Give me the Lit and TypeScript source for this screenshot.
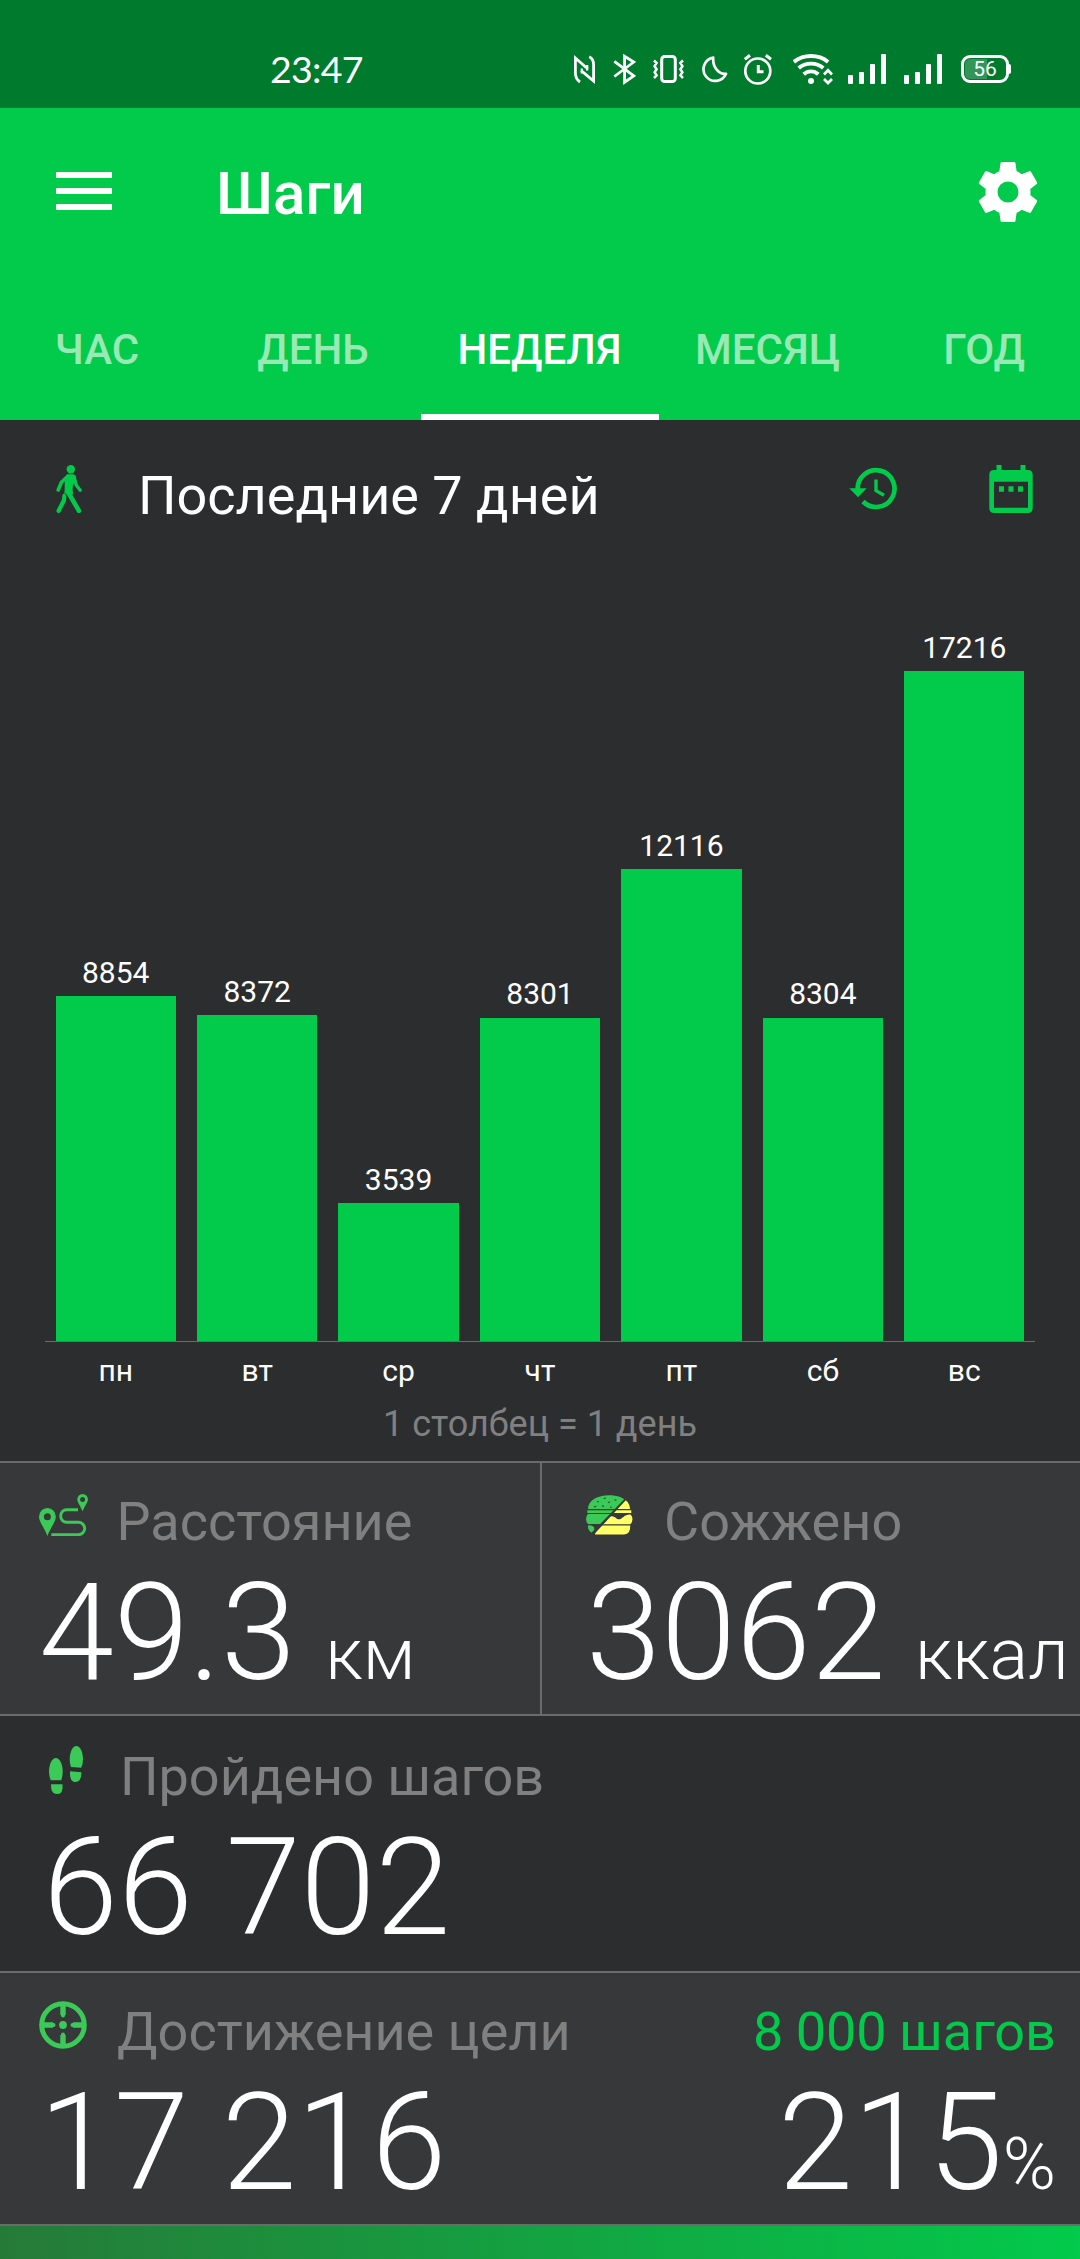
import { LitElement, html, css, svg } from "lit";
import { customElement, property } from "lit/decorators.js";

const GREEN = "#02ca4b";
const LEAF = "#3bca58";

@customElement("status-bar")
class StatusBar extends LitElement {
  static styles = css`
    :host {
      display: flex;
      align-items: center;
      box-sizing: border-box;
      height: 108px;
      padding: 30px 69px 0 270px;
      background: #007a2d;
      color: #fff;
    }
    .time {
      font: 400 37.5px/48px Lato, Roboto, sans-serif;
      letter-spacing: -0.7px;
      margin-right: auto;
    }
    .icons {
      display: flex;
      align-items: center;
    }
    svg {
      display: block;
      height: 32px;
      fill: none;
      stroke: #fff;
    }
    .nfc { width: 21px; }
    .bt { width: 23px; margin-left: 18px; }
    .vib { width: 31px; margin-left: 17px; }
    .moon { width: 26px; margin-left: 18px; }
    .alarm { width: 28px; margin-left: 16px; }
    .wifi { width: 40px; margin-left: 21px; }
    .sig { width: 38px; margin-left: 15px; }
    .sig.second { margin-left: 18px; }
    .battery {
      display: flex;
      align-items: center;
      margin-left: 19px;
    }
    .shell {
      box-sizing: border-box;
      width: 48px;
      height: 28px;
      border: 3px solid #fff;
      border-radius: 9px;
      padding: 1px;
      background: linear-gradient(to right, rgba(255, 255, 255, 0.2) 54%, transparent 54%) content-box;
      font: 400 21px/21px Roboto, sans-serif;
      text-align: center;
    }
    .nub {
      width: 2px;
      height: 10px;
      background: #fff;
      border-radius: 0 2px 2px 0;
    }
  `;

  signal(cls: string) {
    return html`<svg class=${cls} viewBox="0 0 38 32">
      <g fill="#fff" stroke="none">
        <rect x="0" y="22" width="5" height="9" rx="1" />
        <rect x="11" y="19" width="5" height="12" rx="1" />
        <rect x="22" y="11" width="5" height="20" rx="1" />
        <rect x="33" y="1" width="5" height="30" rx="1" />
      </g>
    </svg>`;
  }

  render() {
    return html`
      <div class="time">23:47</div>
      <div class="icons">
        <svg class="nfc" viewBox="0 0 21 32" stroke-width="2.8">
          <path d="M6 29C3 27 1.4 24 1.4 20V5L13.6 15.800" />
          <path d="M7.200 17.600L19.600 28V12C19.600 8 18 5 15.200 3.800" />
          <path d="M13.200 12v5.500M7.800 15.500v5" stroke-width="2.200" />
        </svg>
        <svg class="bt" viewBox="0 0 23 32" stroke-width="2.800">
          <path d="M1.300 8.300L20.800 22.800L11.600 29.200V3.200L20.800 9L1.300 23.500" />
        </svg>
        <svg class="vib" viewBox="0 0 31 32">
          <rect x="8.700" y="3.500" width="13.600" height="25" rx="3" stroke-width="3" />
          <path d="M1 7.500l2.600 2.500-2 3.200 2 3-2 3 2 3.200L1 25M30 7.500L27.400 10l2 3.200-2 3 2 3-2 3.200L30 25" stroke-width="2.500" />
        </svg>
        <svg class="moon" viewBox="0 0 26 32" stroke-width="2.700" stroke-linejoin="round">
          <path d="M11.200 4.700A11.700 11.700 0 1 0 24 20.800C17.500 21.800 10.500 14.800 11.200 4.700z" />
        </svg>
        <svg class="alarm" viewBox="0 0 28 32" stroke-width="2.700">
          <circle cx="13.800" cy="18" r="12.500" />
          <path d="M14.300 12v6.800h5.200" stroke-width="3" />
          <path d="M.8 6.200L6 2.200M21.800 2.200L27 6.200" stroke-width="3" />
        </svg>
        <svg class="wifi" viewBox="0 0 40 32" stroke-width="3.900">
          <path d="M.9 8.900C10.500 1 25.500 1 35.100 8.900" />
          <path d="M5.700 14.900C12.500 9.200 23.500 9.200 30.300 14.900" />
          <path d="M10.700 21.200C15 17.400 21 17.400 25.300 21.200" />
          <circle cx="18" cy="28" r="3" fill="#fff" stroke="none" />
          <path d="M31 21.500l4-4.200 4 4.200M31 26l4 4 4-4" stroke-width="2.700" />
        </svg>
        ${this.signal("sig")} ${this.signal("sig second")}
        <div class="battery">
          <div class="shell">56</div>
          <div class="nub"></div>
        </div>
      </div>
    `;
  }
}

@customElement("app-header")
class AppHeader extends LitElement {
  static styles = css`
    :host {
      display: flex;
      flex-direction: column;
      height: 312px;
      background: #02ca4b;
      color: #fff;
      font-family: Roboto, sans-serif;
      font-weight: 500;
      overflow: hidden;
    }
    .bar {
      display: flex;
      align-items: center;
      height: 168px;
      padding: 0 36px 0 56px;
    }
    .menu { width: 56px; height: 38px; margin-top: -2px; }
    .title {
      flex: 1;
      font-size: 60px;
      line-height: 72px;
      margin: 4px 0 0 104px;
    }
    .gear { width: 72px; height: 72px; }
    .tabs {
      display: flex;
      height: 144px;
      margin-left: -11px;
    }
    .tab {
      flex: none;
      box-sizing: border-box;
      width: 216px;
      padding-top: 49px;
      font-size: 42px;
      line-height: 50px;
      text-align: center;
      color: rgba(255, 255, 255, 0.6);
    }
    .tab.active {
      width: 238px;
      padding-right: 1px;
      color: #fff;
      border-bottom: 6px solid #fff;
    }
    .tab.wide { width: 218px; padding-right: 1px; }
    .tab.last { padding-right: 2px; }
    svg { display: block; fill: #fff; }
  `;

  render() {
    return html`
      <div class="bar">
        <svg class="menu" viewBox="0 0 56 38"><path d="M0 0h56v6H0zM0 16h56v6H0zM0 32h56v6H0z" /></svg>
        <div class="title">Шаги</div>
        <svg class="gear" viewBox="0 0 24 24">
          <path d="M12 15.500a3.500 3.500 0 1 1 0-7 3.500 3.500 0 0 1 0 7m7.430-2.530c.04-.32.07-.64.07-.97s-.03-.66-.07-1l2.110-1.630c.19-.15.24-.42.12-.64l-2-3.460c-.12-.22-.39-.31-.61-.22l-2.490 1c-.52-.39-1.060-.73-1.690-.98l-.37-2.650A.506.506 0 0 0 14 2h-4c-.25 0-.46.18-.5.42l-.37 2.650c-.63.25-1.170.59-1.690.98l-2.490-1c-.22-.09-.49 0-.61.22l-2 3.460c-.13.22-.07.49.12.64L4.570 11c-.04.34-.07.67-.07 1s.03.65.07.97l-2.110 1.660c-.19.15-.25.42-.12.64l2 3.460c.12.22.39.3.61.22l2.490-1.010c.52.4 1.060.74 1.690.99l.37 2.650c.04.24.25.42.5.42h4c.25 0 .46-.18.5-.42l.37-2.650c.63-.26 1.170-.59 1.690-.99l2.490 1.010c.22.080.49 0 .61-.22l2-3.460c.12-.22.070-.49-.12-.64z" />
        </svg>
      </div>
      <div class="tabs">
        <div class="tab">ЧАС</div>
        <div class="tab">ДЕНЬ</div>
        <div class="tab active">НЕДЕЛЯ</div>
        <div class="tab wide">МЕСЯЦ</div>
        <div class="tab last">ГОД</div>
      </div>
    `;
  }
}

@customElement("week-chart")
class WeekChart extends LitElement {
  static styles = css`
    :host {
      display: flex;
      flex-direction: column;
      height: 1041px;
      background: #2c2d2f;
      color: #fff;
      font-family: Roboto, sans-serif;
    }
    .head {
      display: flex;
      align-items: flex-start;
      padding: 45px 47px 0 56px;
    }
    .head svg { display: block; height: 48px; }
    .walk { width: 26px; }
    .title {
      flex: 1;
      margin-left: 56px;
      font-size: 54px;
      line-height: 62px;
    }
    .history { width: 48px; }
    .calendar { width: 44px; margin-left: 92px; }
    .plot {
      flex: 1;
      display: grid;
      grid-template-columns: repeat(7, 1fr);
      align-items: end;
      margin: 0 45px;
      border-bottom: 1px solid #6a6b6b;
    }
    .col {
      display: flex;
      flex-direction: column;
      align-items: center;
    }
    .value { font-size: 30px; line-height: 36px; margin-bottom: 5.5px; }
    .bar { width: 85%; background: #02ca4b; }
    .days {
      display: grid;
      grid-template-columns: repeat(7, 1fr);
      margin: 11px 45px 0 45px;
      font-size: 30px;
      line-height: 36px;
      text-align: center;
    }
    .caption {
      height: 72px;
      padding-top: 14px;
      box-sizing: border-box;
      font-size: 36px;
      line-height: 42px;
      text-align: center;
      color: #808080;
    }
  `;

  @property({ attribute: false }) days: { name: string; steps: number }[] = [];

  render() {
    return html`
      <div class="head">
        <svg class="walk" viewBox="0 0 26 48" fill=${GREEN} stroke=${GREEN} stroke-linecap="round" stroke-linejoin="round">
          <ellipse cx="14.800" cy="4.200" rx="4.200" ry="4.200" stroke="none" />
          <path d="M11 9.200h6.500q2.500.5 2.800 3.500l-3.500 8-.2 5 .8 3.800H8.300l.4-5.500V14z" stroke="none" />
          <path d="M11.500 11.500L5.400 17.200L2.200 25" fill="none" stroke-width="3.600" />
          <path d="M18 11.800L20.300 20.300L24.200 25.200" fill="none" stroke-width="3.400" />
          <path d="M12 27L23 45.800" fill="none" stroke-width="4.600" />
          <path d="M8.500 30.500L7.900 35.500L2.600 45.800" fill="none" stroke-width="4.200" />
          <path d="M9.200 28.500L12.500 34" fill="none" stroke="#2c2d2f" stroke-width=".9" />
        </svg>
        <div class="title">Последние 7 дней</div>
        <svg class="history" viewBox="0 0 48 48" fill="none" stroke=${GREEN}>
          <path d="M8.700 24.500A18.400 18.400 0 1 1 14 36.500" stroke-width="4.700" />
          <path d="M.3 23.200h17.400L9 32.300z" fill=${GREEN} stroke="none" />
          <path d="M27 14.500V25.600l8 4.700" stroke-width="3.400" />
        </svg>
        <svg class="calendar" viewBox="0 0 44 48" fill=${GREEN}>
          <path fill-rule="evenodd" d="M7.500 0h5v5h19V0h5v5H39q4.700 0 4.700 4.700V43.300Q43.700 48 39 48H5Q.3 48 .3 43.300V9.700Q.3 5 5 5h2.500zM5 16.700v26h34v-26z" />
          <path d="M10 21.300h5v5.400h-5zM19.500 21.300h5v5.400h-5zM29 21.300h5v5.400h-5z" />
        </svg>
      </div>
      <div class="plot">
        ${this.days.map(
          (d) => html`<div class="col">
            <div class="value">${d.steps}</div>
            <div class="bar" style="height:${(d.steps * 670) / 17216}px"></div>
          </div>`
        )}
      </div>
      <div class="days">${this.days.map((d) => html`<div>${d.name}</div>`)}</div>
      <div class="caption">1 столбец = 1 день</div>
    `;
  }
}

const routeIcon = svg`
  <g fill="none" stroke=${LEAF} stroke-width="2.900">
    <path d="M39 15.700H27.700a6 6.300 0 0 0 0 12.600H39.300a6.400 6.200 0 0 1 0 12.400H12.300" />
  </g>
  <path fill=${LEAF} fill-rule="evenodd" d="M8.400 14a8.400 8.800 0 0 1 8.400 8.800C16.800 28 11.500 33.500 8.400 42 5.300 33.500 0 28 0 22.800A8.400 8.800 0 0 1 8.400 14zm0 5.200a3.500 3.500 0 1 0 0 7 3.500 3.500 0 0 0 0-7z" />
  <path fill=${LEAF} fill-rule="evenodd" d="M43.600 0a5.300 5.500 0 0 1 5.300 5.500c0 3-3.300 6.500-5.300 11.800-2-5.300-5.300-8.800-5.300-11.800A5.300 5.500 0 0 1 43.600 0zm0 3.100a2.500 2.500 0 1 0 0 5 2.500 2.500 0 0 0 0-5z" />`;

const burgerIcon = svg`
  <defs>
    <clipPath id="left"><path d="M-1-1H42.500L38 4.500L4 39.500H-1z" /></clipPath>
    <clipPath id="right"><path d="M40.500 4.500L48 2V41H6.500z" /></clipPath>
  </defs>
  <g clip-path="url(#left)" fill=${LEAF}>
    <path d="M2 14C2 5 12 .3 23 .3S44 5 44 14z" />
    <path d="M1.300 15.200h44v2.900H1.300z" />
    <path d="M2 19h42.500q2 2 2 5t-2 5H2Q0 27 0 24t2-5z" />
    <path d="M2 30.500Q5 29.500 8 32l.5 3-3 2.800Q1.500 35 2 30.500z" />
    <path d="M11 6.500l2 .5M17.500 3.500l2.500-.5M22 7.800l2-1M16 10.800l2 .5M8 11.800l2.300-.5M28.500 5.400l2-.6M24 12l1.600.4" stroke="#1f5a30" stroke-width="1.200" />
  </g>
  <g clip-path="url(#right)" fill="#ffff66">
    <path d="M2 14C2 5 12 .3 23 .3S44 5 44 14z" />
    <path d="M1.300 15.200h44v2.900H1.300z" />
    <path d="M15 26L22 22C29 19 30 25 33.500 24.300S38 19.300 44.500 19.500Q46.500 21 46.500 24t-2 5.300H12z" />
    <path d="M16 30.600H44.200q.5 8.700-6 8.900H9q0-5 7-8.900z" />
  </g>`;

const feetIcon = svg`<g fill=${LEAF}>
    <path d="M6.800 12C11 12 13.700 19 13.700 25.500Q13.700 30 12.300 34.200H1.700Q0 30 0 25.500C0 19 2.800 12 6.800 12z" />
    <path d="M2 38.200h11.500v4.300Q13 48 8.200 48T2.300 43z" />
    <path d="M27.400 0C31.500 0 34 7 34 13.500q0 4.500-1.800 8.300L21.900 21Q20.600 17 20.700 12.500C21 6 23.500 0 27.400 0z" />
    <path d="M21.100 25.200l11.300 1q.3 9.800-6.400 9.800-5.800-.5-4.900-10.800z" />
  </g>`;

const goalIcon = svg`<g fill="none" stroke=${LEAF} stroke-width="5">
    <circle cx="24" cy="24" r="21.300" />
    <path d="M24 5v9M24 34v9M5 24h9M34 24h9" stroke-width="5.400" />
    <path d="M24 13v1.500M24 33.500V35M13 24h1.500M33.500 24H35" stroke-width="4" stroke-linecap="round" />
    <circle cx="24" cy="24" r="3.900" fill=${LEAF} stroke="none" />
  </g>`;

@customElement("app-root")
class AppRoot extends LitElement {
  static styles = css`
    :host {
      display: flex;
      flex-direction: column;
      width: 1080px;
      height: 2259px;
      overflow: hidden;
      background: #2c2d2f;
      color: #fff;
      font-family: Roboto, sans-serif;
    }
    .row {
      display: flex;
      border-top: 2px solid #6a6b6b;
    }
    .card {
      flex: 1;
      box-sizing: border-box;
      height: 251px;
      padding-top: 26px;
      background: #373839;
    }
    .card.left { flex: none; width: 540px; }
    .card + .card { border-left: 2px solid #6a6b6b; }
    .card.dark { height: 255px; padding-top: 28px; background: transparent; }
    .label {
      display: flex;
      height: 64px;
      font-size: 54px;
      line-height: 65px;
      color: #808080;
    }
    .label svg { display: block; flex: none; }
    .number {
      display: flex;
      margin-top: 10px;
      font-size: 135px;
      line-height: 140px;
      font-weight: 300;
      white-space: pre;
      align-items: baseline;
    }
    .unit { font-size: 72px; line-height: 80px; }
    .n1 .unit, .n2 .unit { margin-left: -3.5px; }
    .route { width: 49px; height: 42px; margin: 5px 28.5px 0 39px; }
    .burger { width: 47px; height: 40px; margin: 6px 31px 0 44px; }
    .feet { width: 34px; height: 48px; margin: 2px 37px 0 49px; }
    .goal { width: 48px; height: 48px; margin: 2px 30px 0 39px; }
    .n1 { padding-left: 39px; }
    .n2 { padding-left: 44px; }
    .n3 { padding-left: 43px; }
    .n4 { padding: 0 24px 0 39px; }
    .end { margin-left: auto; }
    .target { margin-left: auto; padding-right: 24px; color: #02ca4b; word-spacing: -1px; }
    .progress {
      flex: 1;
      border-top: 2px solid #6a6b6b;
      background: linear-gradient(to right, #267a38, #02ca4b);
    }
  `;

  days = [
    { name: "пн", steps: 8854 },
    { name: "вт", steps: 8372 },
    { name: "ср", steps: 3539 },
    { name: "чт", steps: 8301 },
    { name: "пт", steps: 12116 },
    { name: "сб", steps: 8304 },
    { name: "вс", steps: 17216 },
  ];

  render() {
    return html`
      <status-bar></status-bar>
      <app-header></app-header>
      <week-chart .days=${this.days}></week-chart>
      <div class="row">
        <div class="card left">
          <div class="label"><svg class="route" viewBox="0 0 49 42">${routeIcon}</svg>Расстояние</div>
          <div class="number n1">49.3 <span class="unit">км</span></div>
        </div>
        <div class="card">
          <div class="label"><svg class="burger" viewBox="0 0 47 40">${burgerIcon}</svg>Сожжено</div>
          <div class="number n2">3062 <span class="unit">ккал</span></div>
        </div>
      </div>
      <div class="row">
        <div class="card dark">
          <div class="label"><svg class="feet" viewBox="0 0 34 48">${feetIcon}</svg>Пройдено шагов</div>
          <div class="number n3">66 702</div>
        </div>
      </div>
      <div class="row">
        <div class="card">
          <div class="label">
            <svg class="goal" viewBox="0 0 48 48">${goalIcon}</svg>Достижение цели
            <span class="target">8 000 шагов</span>
          </div>
          <div class="number n4"><span>17 216</span><span class="end">215<span class="unit">%</span></span></div>
        </div>
      </div>
      <div class="progress"></div>
    `;
  }
}
